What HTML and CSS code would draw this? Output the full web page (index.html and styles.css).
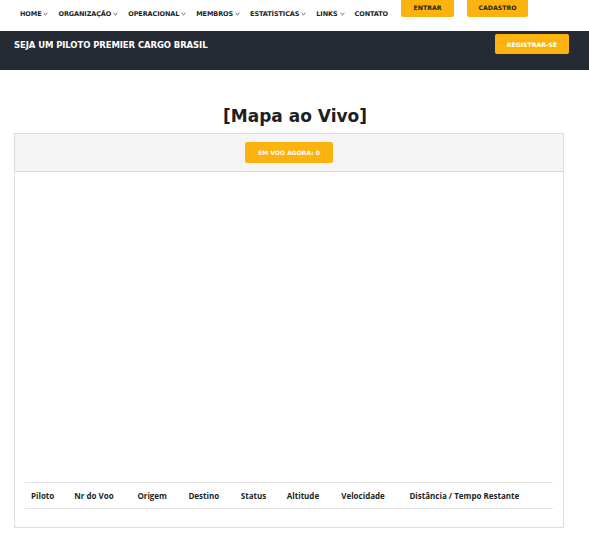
FILE: index.html
```html
<!DOCTYPE html>
<html>
  <head>
    <title>Mapa ao Vivo - Premier Cargo Brasil</title>
    <link rel="stylesheet" href="styles.css">
  </head>
  <body>
    <header class="topbar">
      <nav class="menu">
        <a href="#">HOME <svg class="caret" viewBox="0 0 6 4"><path d="M0.7 0.8 L3 3 L5.3 0.8" /></svg></a>
        <a href="#">ORGANIZAÇÃO <svg class="caret" viewBox="0 0 6 4"><path d="M0.7 0.8 L3 3 L5.3 0.8" /></svg></a>
        <a href="#">OPERACIONAL <svg class="caret" viewBox="0 0 6 4"><path d="M0.7 0.8 L3 3 L5.3 0.8" /></svg></a>
        <a href="#">MEMBROS <svg class="caret" viewBox="0 0 6 4"><path d="M0.7 0.8 L3 3 L5.3 0.8" /></svg></a>
        <a href="#">ESTATÍSTICAS <svg class="caret" viewBox="0 0 6 4"><path d="M0.7 0.8 L3 3 L5.3 0.8" /></svg></a>
        <a href="#">LINKS <svg class="caret" viewBox="0 0 6 4"><path d="M0.7 0.8 L3 3 L5.3 0.8" /></svg></a>
        <a href="#">CONTATO</a>
      </nav>
      <div class="account">
        <a class="btn btn-top" href="#">ENTRAR</a>
        <a class="btn btn-top btn-wide" href="#">CADASTRO</a>
      </div>
    </header>

    <section class="promo">
      <h2>SEJA UM PILOTO PREMIER CARGO BRASIL</h2>
      <a class="btn btn-promo" href="#">REGISTRAR-SE</a>
    </section>

    <main class="content">
      <h1>[Mapa ao Vivo]</h1>
      <div class="card">
        <div class="card-header">
          <span class="btn btn-count">EM VOO AGORA: 0</span>
        </div>
        <div class="card-body">
          <div class="map"></div>
          <table class="flights">
            <thead>
              <tr>
                <th>Piloto</th>
                <th>Nr do Voo</th>
                <th>Origem</th>
                <th>Destino</th>
                <th>Status</th>
                <th>Altitude</th>
                <th>Velocidade</th>
                <th>Distância / Tempo Restante</th>
              </tr>
            </thead>
            <tbody></tbody>
          </table>
        </div>
      </div>
    </main>
  </body>
</html>
```

FILE: styles.css
```css
body {
  margin: 0;
  background: #fff;
  font-family: "DejaVu Sans", sans-serif;
  color: #222;
}

a {
  text-decoration: none;
}

.topbar {
  display: flex;
  align-items: flex-start;
  height: 31px;
  padding-left: 20px;
}

.menu {
  display: flex;
  gap: 10px;
  margin-top: 10px;
}

.menu a {
  display: flex;
  align-items: center;
  gap: 2px;
  color: #1d1f24;
  font-size: 6.5px;
  font-weight: bold;
  letter-spacing: -0.1px;
  white-space: nowrap;
}

.caret {
  width: 5px;
  height: 4px;
  fill: none;
  stroke: #1d1f24;
  stroke-width: 0.9;
}

.account {
  display: flex;
  gap: 13px;
  margin-left: 13px;
}

.btn {
  display: inline-flex;
  align-items: center;
  justify-content: center;
  background: #fdb30f;
  color: #1d1f24;
  font-weight: bold;
  border-radius: 2px;
  white-space: nowrap;
}

.btn-top {
  width: 53px;
  height: 17px;
  font-size: 6.2px;
  padding-bottom: 3px;
  box-sizing: border-box;
  border-radius: 0 0 2px 2px;
}

.btn-wide {
  width: 61px;
}

.promo {
  display: flex;
  justify-content: space-between;
  align-items: flex-start;
  height: 39px;
  background: #262a32;
  padding: 3px 20px 0 14px;
  box-sizing: border-box;
}

.promo h2 {
  margin: 6px 0 0;
  color: #fff;
  font-size: 8.5px;
  font-weight: bold;
  letter-spacing: -0.1px;
}

.btn-promo {
  width: 74px;
  height: 20px;
  color: #fff;
  font-size: 6.2px;
}

.content {
  padding: 36px 25px 0 14px;
}

.content h1 {
  margin: 0 0 7px;
  text-align: center;
  font-size: 17px;
  color: #1d1f24;
  padding-left: 12px;
}

.card {
  border: 1px solid #dcdcdc;
  height: 395px;
  box-sizing: border-box;
  display: flex;
  flex-direction: column;
}

.card-header {
  height: 37px;
  background: #f5f5f5;
  border-bottom: 1px solid #d6d6d6;
  display: flex;
  justify-content: center;
  align-items: center;
}

.btn-count {
  width: 88px;
  height: 21px;
  color: #fff;
  font-size: 6px;
}

.card-body {
  flex: 1;
  padding: 0 10px;
  display: flex;
  flex-direction: column;
}

.map {
  flex: 1;
}

.flights {
  border-collapse: collapse;
  width: 100%;
  margin-bottom: 18px;
}

.flights th {
  border-top: 1px solid #e4e4e4;
  border-bottom: 1px solid #e4e4e4;
  font-family: "Open Sans", sans-serif;
  font-size: 8px;
  font-weight: bold;
  color: #1d1f24;
  text-align: left;
  padding: 6px;
  height: 13px;
  white-space: nowrap;
}
```
